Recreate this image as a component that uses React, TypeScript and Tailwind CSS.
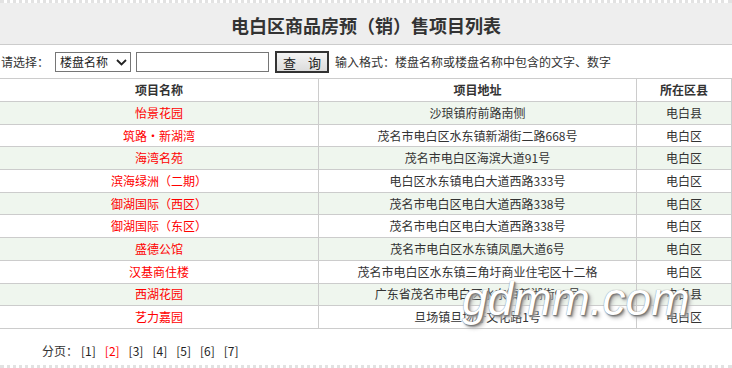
import React from 'react';

const rows = [
  { name: '怡景花园', addr: '沙琅镇府前路南侧', area: '电白县' },
  { name: '筑路·新湖湾', addr: '茂名市电白区水东镇新湖街二路668号', area: '电白区' },
  { name: '海湾名苑', addr: '茂名市电白区海滨大道91号', area: '电白区' },
  { name: '滨海绿洲（二期）', addr: '电白区水东镇电白大道西路333号', area: '电白区' },
  { name: '御湖国际（西区）', addr: '茂名市电白区电白大道西路338号', area: '电白区' },
  { name: '御湖国际（东区）', addr: '茂名市电白区电白大道西路338号', area: '电白区' },
  { name: '盛德公馆', addr: '茂名市电白区水东镇凤凰大道6号', area: '电白区' },
  { name: '汉基商住楼', addr: '茂名市电白区水东镇三角圩商业住宅区十二格', area: '电白区' },
  { name: '西湖花园', addr: '广东省茂名市电白区水东镇新湖街93号', area: '电白县' },
  { name: '艺力嘉园', addr: '旦场镇旦场圩文化路1号', area: '电白区' },
];

const pages = ['1', '2', '3', '4', '5', '6', '7'];

export default function App() {
  return (
    <div
      className="relative w-[732px] h-[368px] overflow-hidden bg-white text-[12px] text-[#333]"
      style={{ fontFamily: '"Noto Sans CJK SC", "DejaVu Sans", sans-serif' }}
    >
      <div className="h-[3px] border-t-[3px] border-dotted border-[#e2e2e2]" />
      {/* title */}
      <div className="h-[42px] bg-[#eeeeee] border-b border-[#cccccc] flex items-center justify-center">
        <h1 className="text-[18px] font-bold text-[#333] leading-none pt-[2px]">电白区商品房预（销）售项目列表</h1>
      </div>

      {/* search */}
      <div className="h-[33px] flex items-center pl-[1px] pt-[1px]">
        <span className="leading-none">请选择：</span>
        <div className="ml-[6px] w-[76px] h-[20px] border border-[#767676] flex items-center justify-between pl-[4px] pr-[3px]">
          <span className="leading-none text-[#222]">楼盘名称</span>
          <svg width="11" height="7" viewBox="0 0 11 7">
            <path d="M1 1 L5.5 5.5 L10 1" fill="none" stroke="#222" strokeWidth="1.8" />
          </svg>
        </div>
        <input className="ml-[5px] w-[133px] h-[20px] border border-[#767676] outline-none" />
        <button className="ml-[6px] w-[54px] h-[22px] border-2 border-[#333] bg-gradient-to-b from-[#f4f4f4] to-[#dcdcdc] text-[13px] leading-none whitespace-nowrap text-[#222] flex items-center justify-center gap-[12px]">
          <span>查</span>
          <span>询</span>
        </button>
        <span className="ml-[6px] leading-none">输入格式：楼盘名称或楼盘名称中包含的文字、数字</span>
      </div>

      {/* table */}
      <table className="-ml-px w-[732px] border-collapse table-fixed">
        <colgroup>
          <col className="w-[319px]" />
          <col className="w-[318px]" />
          <col className="w-[95px]" />
        </colgroup>
        <thead>
          <tr className="h-[23px]">
            <th className="border border-[#cccccc] font-bold text-[#333] p-0">项目名称</th>
            <th className="border border-[#cccccc] font-bold text-[#333] p-0">项目地址</th>
            <th className="border border-[#cccccc] font-bold text-[#333] p-0">所在区县</th>
          </tr>
        </thead>
        <tbody>
          {rows.map((r, i) => (
            <tr key={i} className={i % 2 === 0 ? 'h-[22.7px] bg-[#eff6ee]' : 'h-[22.7px] bg-white'}>
              <td className="border border-[#cccccc] text-center text-[#ff0000] p-0 leading-none">{r.name}</td>
              <td className="border border-[#cccccc] text-center p-0 leading-none whitespace-nowrap">{r.addr}</td>
              <td className="border border-[#cccccc] text-center p-0 leading-none">{r.area}</td>
            </tr>
          ))}
        </tbody>
      </table>

      {/* paging */}
      <div className="h-[37px] flex items-center pl-[42px] pt-[8px] gap-[9px]">
        <span className="-mr-[6px]">分页：</span>
        {pages.map((p) => (
          <span key={p} className={p === '2' ? 'text-[#ff0000]' : 'text-[#222]'}>
            [{p}]
          </span>
        ))}
      </div>
      <div className="absolute left-0 right-0 bottom-0 h-[3px] border-t-[3px] border-dotted border-[#e2e2e2]" />

      {/* watermark */}
      <div
        className="absolute left-[462px] top-[276px] text-[46px] italic leading-none text-white pointer-events-none"
        style={{
          fontFamily: '"Liberation Sans", sans-serif',
          textShadow: '0 0 1px #777, 1px 1px 1px #777, 2px 2px 2px #999, 3px 3px 4px #bbb',
        }}
      >
        gdmm.com
      </div>
    </div>
  );
}
